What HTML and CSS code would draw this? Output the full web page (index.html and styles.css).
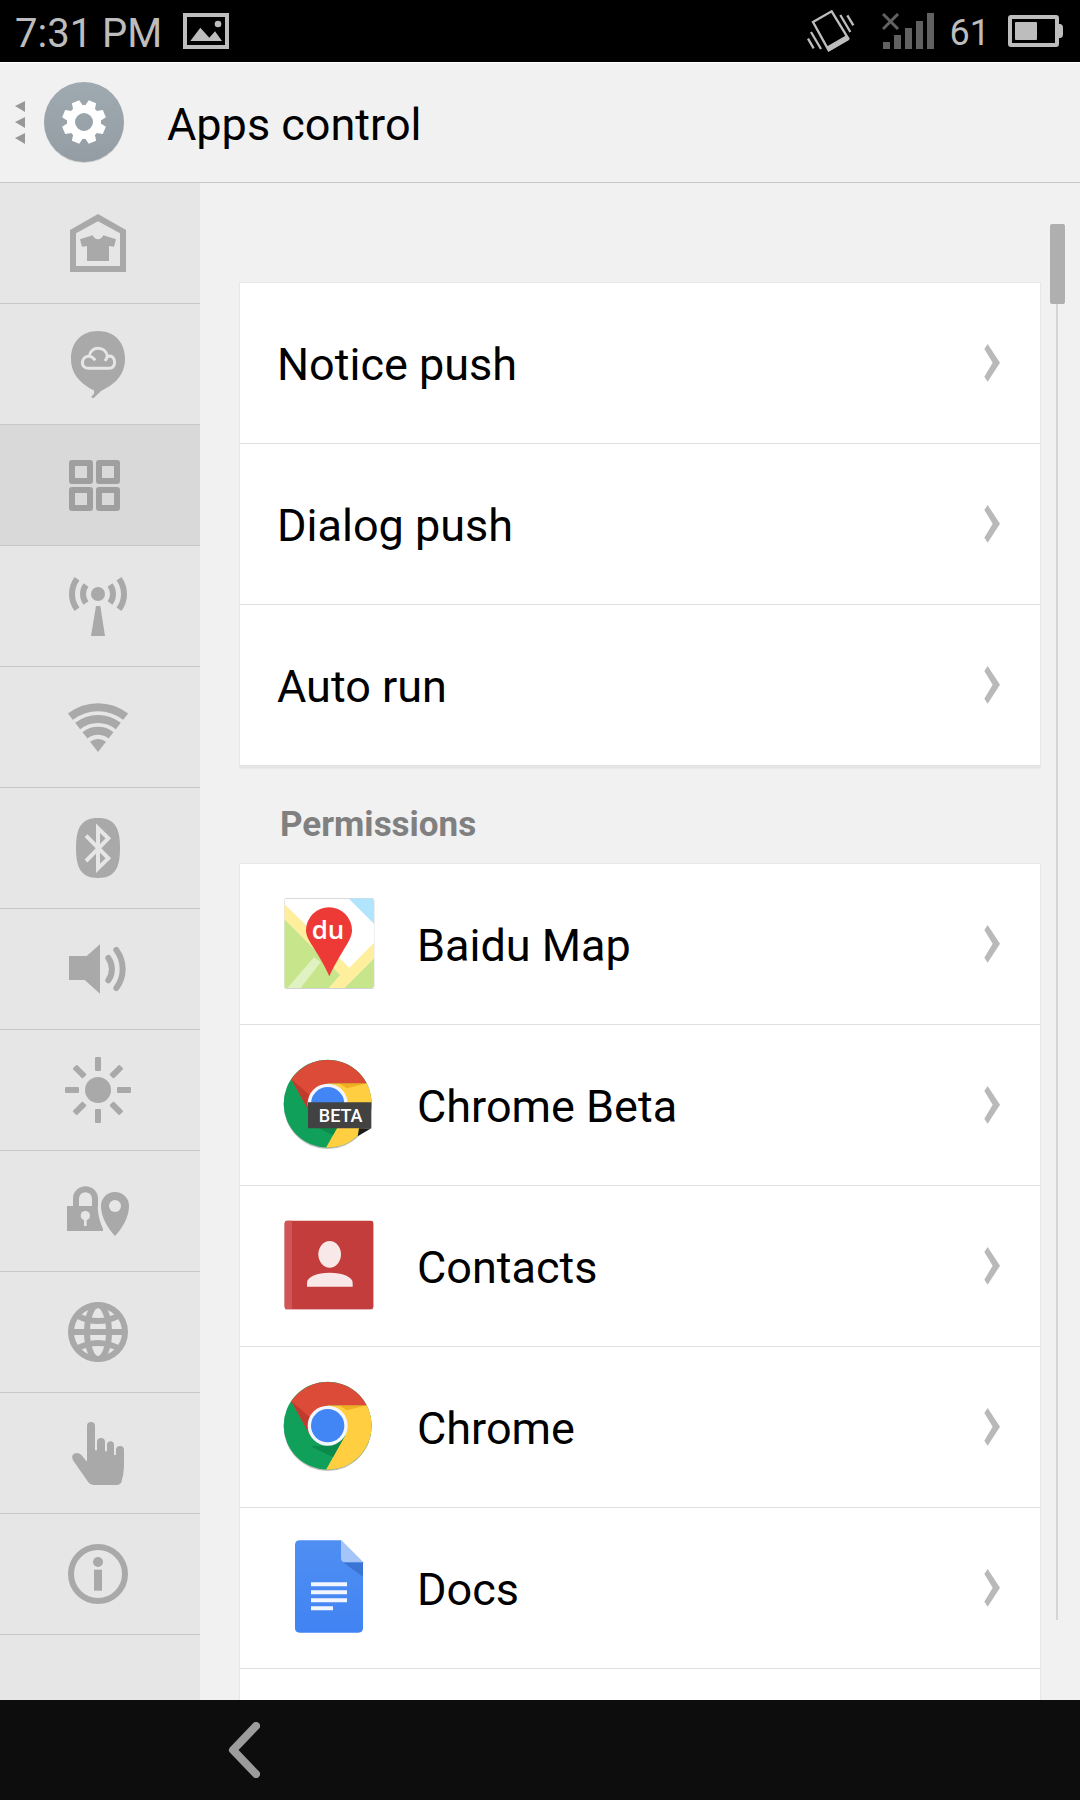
FILE: index.html
```html
<!DOCTYPE html>
<html lang="en">
<head>
  <meta charset="UTF-8" />
  <meta name="viewport" content="width=device-width, initial-scale=1.0" />
  <title>Apps control</title>
  <link rel="stylesheet" href="styles.css">
</head>
<body>

  <!-- Shared icons -->
  <svg class="defs" aria-hidden="true">
    <symbol id="chevron" viewBox="0 0 48 114">
      <path d="M11 0L1 15L26 56L1 98L11 113L48 56z" fill="#b9b9b9"/>
    </symbol>
    <symbol id="chrome" viewBox="0 0 300 300">
      <circle cx="146" cy="150" r="132" fill="#000" opacity="0.25"/>
      <circle cx="146" cy="146" r="132" fill="#10a05a"/>
      <path d="M263 85H146V146L198 176L141 278A132 132 0 0 0 263 85z" fill="#ffce41"/>
      <path d="M198 176L162 240L94 208L146 206z" fill="#0c8a4b"/>
      <path d="M180 85H263L204 100z" fill="#eeb022"/>
      <path d="M37 73L94 176L146 146V85H263A132 132 0 0 0 37 73z" fill="#dc4a38"/>
      <path d="M37 73L87 163L96 124z" fill="#c13a2d"/>
      <circle cx="146" cy="146" r="60" fill="#f3f6fb"/>
      <circle cx="146" cy="146" r="50" fill="#4285f4"/>
    </symbol>
  </svg>

  <!-- Status bar -->
  <div class="status-bar">
    <span class="time">7:31 PM</span>
    <svg class="status-picture" width="46" height="36" viewBox="0 0 138 108" fill="#bdbdbd" role="img" aria-label="Screenshot saved">
      <path d="M0 0H138V108H0zM12 12V96H126V12z" fill-rule="evenodd"/>
      <circle cx="105" cy="33" r="10"/>
      <path d="M22 84L52 44L79 74L96 55L117 84z"/>
    </svg>
    <div class="status-right">
      <svg width="48" height="42" viewBox="0 0 144 126" fill="none" stroke="#bdbdbd" stroke-width="7" role="img" aria-label="Vibrate">
        <path d="M18 36L74 4L124 86L65 121z"/>
        <path d="M57 111L118 76L126 90L67 124z" fill="#bdbdbd" stroke="none"/>
        <path d="M12 66L42 117M3 86L20 115M100 15L130 66M121 16L139 46"/>
      </svg>
      <svg width="52" height="36" viewBox="0 0 156 108" fill="#616161" role="img" aria-label="No signal">
        <path d="M3 87h21v21h-21zM36 66h21v42h-21zM69 45h21v63h-21zM102 24h21v84h-21zM135 0h21v108h-21z"/>
        <path d="M3 3L48 48M48 3L3 48" stroke="#616161" stroke-width="9"/>
      </svg>
      <span class="battery-level">61</span>
      <svg width="55" height="32" viewBox="0 0 165 96" fill="#bdbdbd" role="img" aria-label="Battery">
        <rect x="6" y="6" width="141" height="84" rx="3" fill="none" stroke="#bdbdbd" stroke-width="12"/>
        <rect x="21" y="21" width="66" height="54" rx="3"/>
        <path d="M151 27h7q7 2 7 10v22q0 8-7 10h-7z"/>
      </svg>
    </div>
  </div>

  <!-- Header -->
  <header class="header">
    <svg class="drawer-arrows" width="10" height="44" viewBox="0 0 10 44" fill="#989898">
      <path d="M10 0V11L0 5zM10 16V27L0 21zM10 32V43L0 37z"/>
    </svg>
    <svg class="settings-icon" width="80" height="82" viewBox="0 0 80 82">
      <defs>
        <linearGradient id="disc" x1="0" y1="0" x2="0" y2="1">
          <stop offset="0" stop-color="#9faab0"/>
          <stop offset="1" stop-color="#939da3"/>
        </linearGradient>
        <path id="tooth" d="M-5 -14L-5 -17L-4 -22H4L5 -17V-14z"/>
      </defs>
      <circle cx="40" cy="41" r="40" fill="#cfd3d5"/>
      <circle cx="40" cy="40" r="40" fill="url(#disc)"/>
      <g transform="translate(40 40)" fill="#fff">
        <circle r="13" fill="none" stroke="#fff" stroke-width="8"/>
        <use href="#tooth" transform="rotate(22.5)"/>
        <use href="#tooth" transform="rotate(67.5)"/>
        <use href="#tooth" transform="rotate(112.5)"/>
        <use href="#tooth" transform="rotate(157.5)"/>
        <use href="#tooth" transform="rotate(202.5)"/>
        <use href="#tooth" transform="rotate(247.5)"/>
        <use href="#tooth" transform="rotate(292.5)"/>
        <use href="#tooth" transform="rotate(337.5)"/>
      </g>
    </svg>
    <h1>Apps control</h1>
  </header>

  <div class="main">

    <!-- Settings categories -->
    <nav class="rail">
      <button aria-label="Theme">
        <svg viewBox="0 0 360 360">
          <path d="M180 93L264 141V267H96V141zM180 115L114 151V249H246V151z" fill-rule="evenodd"/>
          <path d="M164 157L126 169L132 191L147 189V234H213V189L228 191L234 169L196 157Q190 169 180 169T164 157z"/>
        </svg>
      </button>
      <button aria-label="Cloud">
        <svg viewBox="0 0 360 360">
          <path d="M180 81C228 81 261 114 261 164C261 212 232 240 190 260L168 281Q161 284 160 278L168 269V259C130 240 99 212 99 164C99 114 132 81 180 81z"/>
          <path d="M172 169C164 160 156 157 154 157C158 124 204 126 208 157Q206 164 201 171M208 158C224 152 230 164 230 176Q228 193 214 193H150C126 193 128 156 154 157" fill="none" stroke="#e6e6e6" stroke-width="9"/>
        </svg>
      </button>
      <button class="active" aria-label="Apps control">
        <svg class="outline" viewBox="0 0 360 360">
          <path d="M102 114h54v54h-54zM183 114h54v54h-54zM102 195h54v54h-54zM183 195h54v54h-54z" stroke-linejoin="round"/>
        </svg>
      </button>
      <button aria-label="Mobile network">
        <svg viewBox="0 0 360 360">
          <circle cx="180" cy="144" r="21"/>
          <path d="M174 180H187L201 270H159z"/>
          <path class="line" d="M144 117A45 45 0 0 0 144 171M216 117A45 45 0 0 1 216 171M117 98A78 78 0 0 0 117 190M243 98A78 78 0 0 1 243 190"/>
        </svg>
      </button>
      <button aria-label="Wi-Fi">
        <svg viewBox="0 0 360 360">
          <path d="M180 255L156 224A39 39 0 0 1 204 224z"/>
          <path d="M97 149A135 135 0 0 1 263 149M119 177A99 99 0 0 1 241 177M141 205A63 63 0 0 1 219 205" fill="none" stroke="#a9a9a9" stroke-width="24"/>
        </svg>
      </button>
      <button aria-label="Bluetooth">
        <svg viewBox="0 0 360 360">
          <path d="M180 90C232 90 246 122 246 180S232 270 180 270S114 238 114 180S128 90 180 90z"/>
          <path d="M144 143L211 211L180 241V121L211 151L144 219" fill="none" stroke="#e6e6e6" stroke-width="12"/>
        </svg>
      </button>
      <button aria-label="Sound">
        <svg viewBox="0 0 360 360">
          <path d="M93 141H146L186 106V254L140 213H93z"/>
          <path class="line" d="M235 123A95 95 0 0 1 235 237M211 147A58 58 0 0 1 211 214" stroke-linecap="round"/>
        </svg>
      </button>
      <button aria-label="Display">
        <svg viewBox="0 0 360 360">
          <circle cx="180" cy="180" r="39"/>
          <path id="rays" d="M171 84q0-3 3-3h12q3 0 3 3v36q0 3-3 3h-12q-3 0-3-3zM171 240q0-3 3-3h12q3 0 3 3v36q0 3-3 3h-12q-3 0-3-3z"/>
          <use href="#rays" transform="rotate(45 180 180)"/>
          <use href="#rays" transform="rotate(90 180 180)"/>
          <use href="#rays" transform="rotate(135 180 180)"/>
        </svg>
      </button>
      <button aria-label="Security and location">
        <svg viewBox="0 0 360 360">
          <path d="M87 165H179C180 195 187 217 195 233V240H87z"/>
          <path class="line" d="M114 166V143A28 28 0 0 1 171 143V166"/>
          <path d="M231 123A42 42 0 0 1 273 165C273 200 252 232 231 255C210 232 189 200 189 165A42 42 0 0 1 231 123z"/>
          <path class="hole" d="M138 203V225H146V203z"/>
          <circle class="hole" cx="142" cy="194" r="14"/>
          <circle class="hole" cx="231" cy="165" r="18"/>
        </svg>
      </button>
      <button aria-label="Language">
        <svg class="outline" viewBox="0 0 360 360">
          <circle cx="180" cy="180" r="81"/>
          <ellipse cx="180" cy="180" rx="33" ry="81"/>
          <path d="M99 180H261M116 130Q180 164 244 130M116 230Q180 196 244 230"/>
        </svg>
      </button>
      <button aria-label="Gestures">
        <svg viewBox="0 0 360 360">
          <path d="M147 206V99a12 12 0 0 1 24 0V172H177V147a12 12 0 0 1 24 0V175H207V155a10 10 0 0 1 21 0V186H234V171a12 12 0 0 1 24 0V221Q257 245 250 268Q247 276 238 276H166Q157 276 151 268L106 203Q98 188 108 182Q120 176 131 187z"/>
        </svg>
      </button>
      <button aria-label="About phone">
        <svg viewBox="0 0 360 360">
          <circle class="line" cx="180" cy="180" r="81"/>
          <circle cx="180" cy="144" r="15"/>
          <path d="M168 167h24v63h-24z"/>
        </svg>
      </button>
    </nav>

    <!-- Content -->
    <main class="content">
      <ul class="card">
        <li><a href="#"><span>Notice push</span><svg class="chevron"><use href="#chevron"/></svg></a></li>
        <li><a href="#"><span>Dialog push</span><svg class="chevron"><use href="#chevron"/></svg></a></li>
        <li><a href="#"><span>Auto run</span><svg class="chevron"><use href="#chevron"/></svg></a></li>
      </ul>

      <h2>Permissions</h2>

      <ul class="card">
        <li><a href="#">
          <svg class="app-icon" viewBox="0 0 300 300">
            <defs><clipPath id="tile"><rect x="16" y="13" width="269" height="269" rx="8"/></clipPath></defs>
            <rect x="15" y="12" width="271" height="273" rx="9" fill="#d2d2d2"/>
            <g clip-path="url(#tile)">
              <path d="M16 14H285V282H16z" fill="#fff"/>
              <path d="M208 13H285V89z" fill="#b1e4fd"/>
              <path d="M16 75L184 243L150 282H16zM285 193V282H195z" fill="#c7e58a"/>
              <path d="M16 30L211 221L285 146V193L195 282H150L184 243L16 75z" fill="#ffee9c"/>
              <path d="M105 190L125 205L65 282H25z" fill="#e0f2c2"/>
            </g>
            <path d="M150 40A69 69 0 0 1 219 109C219 140 190 165 151 247C114 165 81 140 81 109A69 69 0 0 1 150 40z" fill="#ee3a37"/>
            <text class="du" x="147" y="136" text-anchor="middle">du</text>
          </svg>
          <span>Baidu Map</span><svg class="chevron"><use href="#chevron"/></svg>
        </a></li>
        <li><a href="#">
          <svg class="app-icon" viewBox="0 0 300 300">
            <use href="#chrome"/>
            <path d="M240 220H277L236 244z" fill="#1c1c1c"/>
            <path d="M87 142H277V220H87z" fill="#424242"/>
            <text class="beta" x="185" y="201" text-anchor="middle">BETA</text>
          </svg>
          <span>Chrome Beta</span><svg class="chevron"><use href="#chevron"/></svg>
        </a></li>
        <li><a href="#">
          <svg class="app-icon" viewBox="0 0 300 300">
            <rect x="17" y="17" width="266" height="265" rx="7" fill="#e3b9b9"/>
            <rect x="17" y="14" width="266" height="265" rx="7" fill="#c33d3d"/>
            <path d="M39 14H24q-7 0-7 7V272q0 7 7 7H39z" fill="#cf5556"/>
            <ellipse cx="152" cy="115" rx="34" ry="40" fill="#f8e8e8"/>
            <path d="M84 212V200C84 182 115 170 152 170S221 182 221 200V212z" fill="#f8e8e8"/>
          </svg>
          <span>Contacts</span><svg class="chevron"><use href="#chevron"/></svg>
        </a></li>
        <li><a href="#">
          <svg class="app-icon" viewBox="0 0 300 300"><use href="#chrome"/></svg>
          <span>Chrome</span><svg class="chevron"><use href="#chevron"/></svg>
        </a></li>
        <li><a href="#">
          <svg class="app-icon" viewBox="0 0 300 300">
            <defs>
              <linearGradient id="sheet" x1="0" y1="0" x2="0" y2="1">
                <stop offset="0" stop-color="#4f8ff3"/>
                <stop offset="1" stop-color="#4183f2"/>
              </linearGradient>
            </defs>
            <path d="M62 7H186L252 73V270q0 14-14 14H62q-14 0-14-14V21q0-14 14-14z" fill="url(#sheet)"/>
            <path d="M192 73H252V116z" fill="#3a74d4"/>
            <path d="M186 7L252 73H200q-14 0-14-14z" fill="#a5c5f9"/>
            <path d="M96 133h108v12h-108zM96 157h108v12h-108zM96 181h108v12h-108zM96 205h66v12h-66z" fill="#f1f5fe"/>
          </svg>
          <span>Docs</span><svg class="chevron"><use href="#chevron"/></svg>
        </a></li>
        <li class="next-row"></li>
      </ul>

      <div class="scroll-track"><div class="scroll-thumb"></div></div>
    </main>
  </div>

  <!-- Navigation bar -->
  <footer class="nav-bar">
    <button aria-label="Back">
      <svg width="32" height="56" viewBox="0 0 32 56" fill="none" stroke="#9c9c9c" stroke-width="8" stroke-linecap="round" stroke-linejoin="round">
        <path d="M28 4L5 28L28 52"/>
      </svg>
    </button>
  </footer>

</body>
</html>
```

FILE: styles.css
```css
* {
  box-sizing: border-box;
}

body {
  font-family: Roboto, "Liberation Sans", sans-serif;
  margin: 0;
  height: 100vh;
  display: flex;
  flex-direction: column;
  overflow: hidden;
  background-color: #f1f1f1;
  color: #000;
}

button {
  border: none;
  background: none;
  padding: 0;
  cursor: pointer;
}

svg {
  display: block;
  flex-shrink: 0;
}

.defs {
  position: absolute;
  width: 0;
  height: 0;
}

/* Status bar */
.status-bar {
  flex: 0 0 62px;
  display: flex;
  align-items: center;
  padding: 0 17px 0 15px;
  background-color: #000;
  color: #bdbdbd;
}

.time {
  font-size: 40px;
  padding-top: 4px;
}

.status-picture {
  margin-left: 21px;
}

.status-right {
  display: flex;
  align-items: center;
  margin-left: auto;
}

.battery-level {
  font-size: 36px;
  padding-top: 4px;
  margin: 0 18px 0 16px;
}

.status-right svg + svg {
  margin-left: 27px;
}

/* Header */
.header {
  flex: 0 0 121px;
  display: flex;
  align-items: center;
  padding-left: 15px;
  border-top: 1px solid #fff;
  border-bottom: 1px solid #c8c8c8;
}

.settings-icon {
  margin-left: 19px;
}

.header h1 {
  margin: 0 0 0 43px;
  padding-top: 3px;
  font-size: 45px;
  font-weight: 400;
}

.main {
  flex: 1;
  min-height: 0;
  display: flex;
}

/* Left rail */
.rail {
  flex: 0 0 200px;
  overflow: hidden;
  background-color: #e6e6e6;
}

.rail button {
  display: block;
  width: 100%;
  height: 121px;
  padding-left: 38px;
  border-bottom: 1px solid #c8c8c8;
}

.rail button.active {
  background-color: #d9d9d9;
}

.rail svg {
  width: 120px;
  height: 120px;
  fill: #a9a9a9;
}

.rail .line,
.rail .outline {
  fill: none;
  stroke: #a9a9a9;
  stroke-width: 18px;
}

.rail .active .outline {
  stroke: #9f9f9f;
}

.rail .hole {
  fill: #e6e6e6;
}

/* Content */
.content {
  position: relative;
  flex: 1;
  overflow: hidden;
  padding: 100px 40px 0;
}

.card {
  list-style: none;
  margin: 0;
  padding: 0;
  background-color: #fff;
  box-shadow: 0 0 0 1px #e7e7e7, 0 2px 2px #dcdcdc;
}

.card li {
  height: 161px;
  border-bottom: 1px solid #e0e0e0;
}

.card a {
  display: flex;
  align-items: center;
  height: 100%;
  padding: 0 40px 0 37px;
  font-size: 45px;
  color: #000;
  text-decoration: none;
}

.card span {
  padding-top: 2px;
}

.app-icon {
  width: 100px;
  height: 100px;
  margin: 0 38px 0 2px;
}

.chevron {
  width: 16px;
  height: 38px;
  margin-left: auto;
}

.du {
  font-family: "Open Sans", Roboto, sans-serif;
  font-size: 78px;
  font-weight: 600;
  fill: #fff;
}

.beta {
  font-size: 54px;
  font-weight: 500;
  fill: #fff;
}

.content h2 {
  margin: 0;
  padding: 20px 0 0 40px;
  height: 98px;
  font-size: 35px;
  line-height: 78px;
  color: #808080;
}

/* Lies over the right edge of the list */
.scroll-track {
  position: absolute;
  top: 41px;
  right: 15px;
  bottom: 80px;
  width: 15px;
  background: linear-gradient(#d5d5d5, #d5d5d5) 6px 0 / 2px 100% no-repeat;
}

.scroll-thumb {
  height: 80px;
  border-radius: 2px;
  background-color: #afafaf;
}

/* Navigation bar */
.nav-bar {
  flex: 0 0 100px;
  display: flex;
  align-items: center;
  padding-left: 228px;
  background-color: #0d0d0d;
}
```
